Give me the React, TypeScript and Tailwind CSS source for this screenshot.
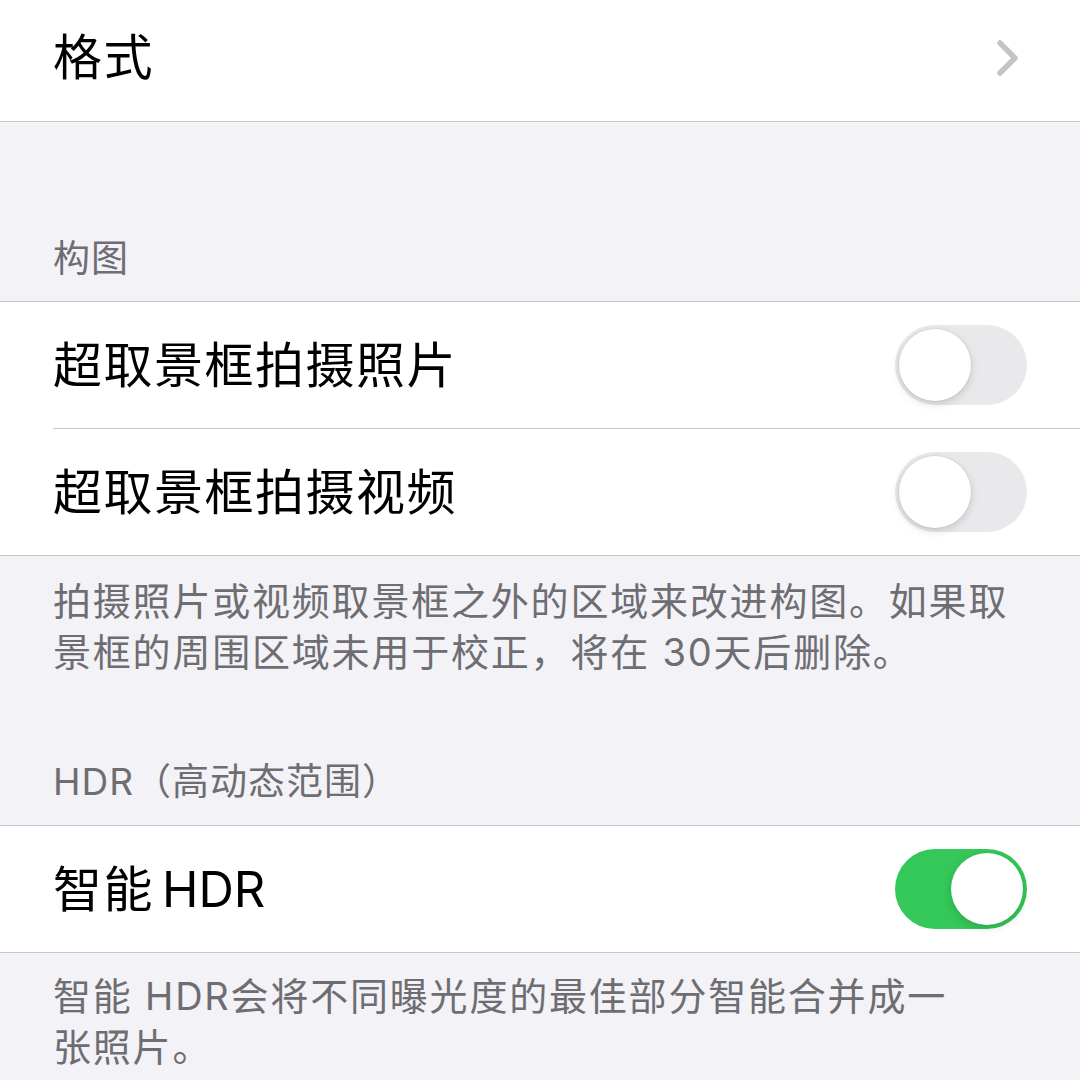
import React from "react";

const FONT = "font-['Inter','Noto_Sans_CJK_SC',sans-serif]";

function Toggle({ on }: { on: boolean }) {
  return on ? (
    <div className="w-[132px] h-[80px] rounded-full bg-[#34c759] flex items-center justify-end pr-[4px] shrink-0">
      <div className="w-[72px] h-[72px] rounded-full bg-white shadow-[0_3px_8px_rgba(0,0,0,0.15)]" />
    </div>
  ) : (
    <div className="w-[132px] h-[80px] rounded-full bg-[#e9e9eb] flex items-center pl-[4px] shrink-0">
      <div className="w-[72px] h-[72px] rounded-full bg-white shadow-[0_3px_8px_rgba(0,0,0,0.15),0_0_0_1px_rgba(0,0,0,0.04)]" />
    </div>
  );
}

function Chevron() {
  return (
    <svg width="30" height="40" viewBox="0 0 30 40" className="shrink-0">
      <path
        d="M6 5 L21 20 L6 35"
        fill="none"
        stroke="#c4c4c7"
        strokeWidth="5.5"
        strokeLinecap="round"
        strokeLinejoin="round"
      />
    </svg>
  );
}

function SwitchRow({ label, on }: { label: React.ReactNode; on: boolean }) {
  return (
    <div className="h-[126px] bg-white flex items-center justify-between pl-[53px] pr-[53px]">
      <span className="text-[49px] leading-none tracking-[1.5px] text-black">{label}</span>
      <Toggle on={on} />
    </div>
  );
}

function Header({ children }: { children: React.ReactNode }) {
  return (
    <div className="text-[37px] leading-[44px] tracking-[1px] text-[#6d6d72] pl-[53px]">{children}</div>
  );
}

function Footer({ lines }: { lines: string[] }) {
  return (
    <div className="text-[38px] leading-[51px] tracking-[1.8px] text-[#6d6d72] pl-[53px]">
      {lines.map((l) => (
        <div key={l}>{l}</div>
      ))}
    </div>
  );
}

export default function App() {
  return (
    <div className={`w-[1080px] h-[1080px] bg-[#f2f2f7] overflow-hidden ${FONT}`}>
      {/* Format row */}
      <div className="h-[122px] bg-white border-b border-[#c8c7cc] flex items-center justify-between pl-[53px] pr-[56px] pb-[6px]">
        <span className="text-[49px] leading-none tracking-[1.5px] text-black">格式</span>
        <Chevron />
      </div>

      {/* Composition section */}
      <div className="h-[179px] flex flex-col justify-end pb-[20px]">
        <Header>构图</Header>
      </div>
      <div className="border-y border-[#c8c7cc] bg-white">
        <SwitchRow label="超取景框拍摄照片" on={false} />
        <div className="ml-[53px] h-px bg-[#c8c7cc]" />
        <SwitchRow label="超取景框拍摄视频" on={false} />
      </div>
      <div className="pt-[20px]">
        <Footer
          lines={[
            "拍摄照片或视频取景框之外的区域来改进构图。如果取",
            "景框的周围区域未用于校正，将在 30天后删除。",
          ]}
        />
      </div>

      {/* HDR section */}
      <div className="pt-[82px] pb-[21px]">
        <Header>HDR（高动态范围）</Header>
      </div>
      <div className="border-y border-[#c8c7cc] bg-white">
        <SwitchRow
          label={
            <>
              智能<span className="ml-[8px] tracking-normal">HDR</span>
            </>
          }
          on={true}
        />
      </div>
      <div className="pt-[18px]">
        <Footer lines={["智能 HDR会将不同曝光度的最佳部分智能合并成一", "张照片。"]} />
      </div>
    </div>
  );
}
